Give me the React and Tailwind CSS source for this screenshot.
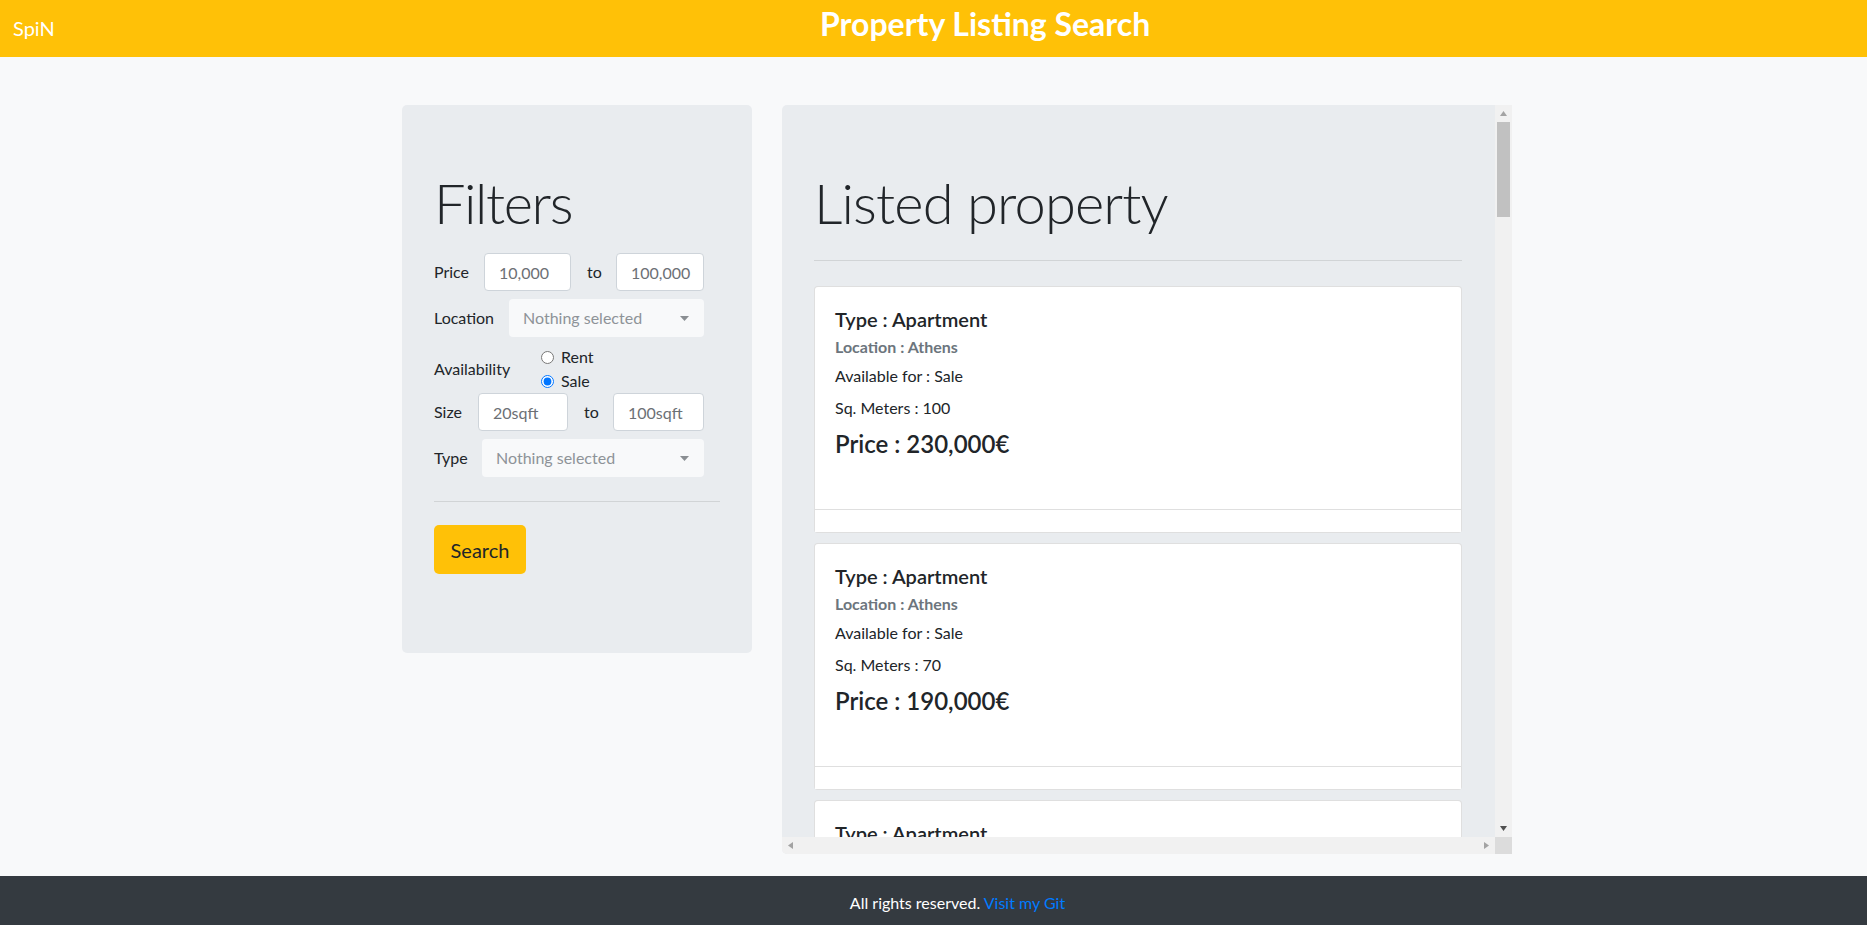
import React from 'react';

const listings = [
  { type: 'Apartment', location: 'Athens', available: 'Sale', size: 100, price: '230,000' },
  { type: 'Apartment', location: 'Athens', available: 'Sale', size: 70, price: '190,000' },
  { type: 'Apartment', location: 'Athens', available: 'Rent', size: 85, price: '650' },
];

function Caret() {
  return (
    <svg width="9" height="5" viewBox="0 0 9 5" className="shrink-0">
      <path d="M0 0 L9 0 L4.5 5 Z" fill="#8a8e92" />
    </svg>
  );
}

// little triangles on the scrollbar buttons
function Arrow({ dir, color }) {
  const d = {
    up: 'M0 5 L3.5 0 L7 5 Z',
    down: 'M0 0 L7 0 L3.5 5 Z',
    left: 'M5 0 L5 7 L0 3.5 Z',
    right: 'M0 0 L5 3.5 L0 7 Z',
  }[dir];
  const horiz = dir === 'left' || dir === 'right';
  return (
    <svg width={horiz ? 5 : 7} height={horiz ? 7 : 5} viewBox={horiz ? '0 0 5 7' : '0 0 7 5'}>
      <path d={d} fill={color} />
    </svg>
  );
}

function FakeSelect({ width }) {
  return (
    <div className={`${width} h-[38px] rounded-[4px] bg-[#f8f9fa] flex items-center justify-between pl-[14px] pr-[15px] text-[#8e9398]`}>
      <span>Nothing selected</span>
      <Caret />
    </div>
  );
}

function Filters() {
  const input = 'h-[38px] rounded-[4px] border border-[#ced4da] bg-white pl-[14px] pr-2 text-[#6c7075] outline-none';
  return (
    <aside className="w-[350px] h-[548px] shrink-0 rounded-[5px] bg-[#e9ecef] px-8 pt-16">
      <h2 className="text-[56px] font-light leading-[67px] tracking-[-0.025em] text-[#212529]">Filters</h2>
      <form className="mt-[17px]" onSubmit={(e) => e.preventDefault()}>
        <div className="flex items-center">
          <label className="w-[50px]">Price</label>
          <input className={`${input} w-[87px]`} defaultValue="10,000" />
          <span className="w-[45px] pl-[16px]">to</span>
          <input className={`${input} w-[88px]`} defaultValue="100,000" />
        </div>
        <div className="flex items-center mt-[8px]">
          <label className="w-[75px]">Location</label>
          <FakeSelect width="w-[195px]" />
        </div>
        <div className="flex items-center mt-[8px] h-[48px]">
          <label className="w-[107px]">Availability</label>
          <div className="flex flex-col">
            <label className="flex items-center h-[24px] gap-[7px]">
              <input type="radio" name="avail" className="w-[13px] h-[13px]" />
              <span>Rent</span>
            </label>
            <label className="flex items-center h-[24px] gap-[7px]">
              <input type="radio" name="avail" defaultChecked className="w-[13px] h-[13px]" />
              <span>Sale</span>
            </label>
          </div>
        </div>
        <div className="flex items-center">
          <label className="w-[44px]">Size</label>
          <input className={`${input} w-[90px]`} defaultValue="20sqft" />
          <span className="w-[45px] pl-[16px]">to</span>
          <input className={`${input} w-[91px]`} defaultValue="100sqft" />
        </div>
        <div className="flex items-center mt-[8px]">
          <label className="w-[48px]">Type</label>
          <FakeSelect width="w-[222px]" />
        </div>
        <hr className="mt-[24px] border-0 border-t border-black/10" />
        <button className="mt-[23px] h-[49px] w-[92px] rounded-[5px] bg-[#ffc107] text-[20px] text-[#212529]">
          Search
        </button>
      </form>
    </aside>
  );
}

function Card({ item }) {
  return (
    <div className="mb-[10px] rounded-[4px] border border-black/[.125] bg-white">
      <div className="h-[222px] px-5 pt-5">
        <h5 className="text-[20px] font-semibold leading-6 text-[#212529]">Type : {item.type}</h5>
        <h6 className="mt-[6px] text-base font-bold leading-[19px] text-[#6c757d]">Location : {item.location}</h6>
        <p className="mt-[8px] leading-6">Available for : {item.available}</p>
        <p className="mt-[8px] leading-6">Sq. Meters : {item.size}</p>
        <h4 className="mt-[9px] text-[24px] font-semibold leading-[29px] text-[#212529]">Price : {item.price}€</h4>
      </div>
      <div className="h-[23px] border-t border-black/[.125] bg-white" />
    </div>
  );
}

function Listing() {
  return (
    <section className="w-[730px] h-[749px] shrink-0 flex flex-col overflow-hidden rounded-l-[5px] bg-[#e9ecef]">
      <div className="flex flex-1 min-h-0">
        <div className="flex-1 overflow-hidden pl-8 pr-[33px] pt-16">
          <h2 className="text-[56px] font-light leading-[67px] tracking-[-0.015em] text-[#212529]">Listed property</h2>
          <hr className="mt-[24px] mb-[25px] border-0 border-t border-black/10" />
          {listings.map((item, i) => (
            <Card key={i} item={item} />
          ))}
        </div>
        <div className="w-[17px] shrink-0 bg-[#f1f1f1] flex flex-col items-center">
          <div className="h-[17px] flex items-center justify-center">
            <Arrow dir="up" color="#a3a3a3" />
          </div>
          <div className="w-[13px] h-[95px] bg-[#c1c1c1]" />
          <div className="flex-1" />
          <div className="h-[17px] flex items-center justify-center">
            <Arrow dir="down" color="#505050" />
          </div>
        </div>
      </div>
      <div className="h-[17px] shrink-0 flex">
        <div className="flex-1 bg-[#f1f1f1] flex items-center justify-between px-[6px]">
          <Arrow dir="left" color="#a3a3a3" />
          <Arrow dir="right" color="#a3a3a3" />
        </div>
        <div className="w-[17px] bg-[#dcdcdc]" />
      </div>
    </section>
  );
}

export default function App() {
  return (
    <div className="min-h-screen flex flex-col bg-[#f8f9fa] text-base text-[#212529] font-['Lato','Open_Sans',sans-serif]">
      <header className="h-[57px] bg-[#ffc107] flex items-center text-white">
        <div className="w-[820px] pl-[13px] mb-[2px] text-[20px]">SpiN</div>
        <h1 className="mb-[10px] text-[32px] font-bold leading-[38px]">Property Listing Search</h1>
      </header>
      <main className="pt-[48px] pl-[402px] flex gap-[30px] items-start">
        <Filters />
        <Listing />
      </main>
      <footer className="mt-[22px] h-[49px] bg-[#343a40] flex items-center justify-center pl-[48px] pt-[4px] text-white">
        <span>
          All rights reserved. <a href="#" className="text-[#007bff]">Visit my Git</a>
        </span>
      </footer>
    </div>
  );
}
